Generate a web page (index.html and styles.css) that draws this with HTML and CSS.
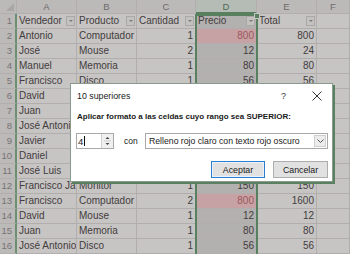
FILE: index.html
```html
<!DOCTYPE html>
<html lang="es">
<head>
<meta charset="utf-8">
<title>10 superiores</title>
<link rel="stylesheet" href="styles.css">
</head>
<body>
<div class="sheet">
  <div class="corner"><span class="tri"></span></div>
  <div class="ch">A</div><div class="ch">B</div><div class="ch">C</div><div class="ch sel">D</div><div class="ch">E</div><div class="ch">F</div>

  <div class="rh">1</div>
  <div class="c hd"><span class="t">Vendedor</span><span class="fb"></span></div>
  <div class="c hd"><span class="t">Producto</span><span class="fb"></span></div>
  <div class="c hd"><span class="t">Cantidad</span><span class="fb"></span></div>
  <div class="c hd d"><span class="t">Precio</span><span class="fb"></span></div>
  <div class="c hd"><span class="t">Total</span><span class="fb"></span></div>
  <div class="c"></div>

  <div class="rh">2</div><div class="c">Antonio</div><div class="c">Computador</div><div class="c n">1</div><div class="c n d red">800</div><div class="c n">800</div><div class="c"></div>
  <div class="rh">3</div><div class="c">José</div><div class="c">Mouse</div><div class="c n">2</div><div class="c n d">12</div><div class="c n">24</div><div class="c"></div>
  <div class="rh">4</div><div class="c">Manuel</div><div class="c">Memoria</div><div class="c n">1</div><div class="c n d">80</div><div class="c n">80</div><div class="c"></div>
  <div class="rh">5</div><div class="c">Francisco</div><div class="c">Disco</div><div class="c n">1</div><div class="c n d">56</div><div class="c n">56</div><div class="c"></div>
  <div class="rh">6</div><div class="c">David</div><div class="c"></div><div class="c n"></div><div class="c n d"></div><div class="c n"></div><div class="c"></div>
  <div class="rh">7</div><div class="c">Juan</div><div class="c"></div><div class="c n"></div><div class="c n d"></div><div class="c n"></div><div class="c"></div>
  <div class="rh">8</div><div class="c">José Antonio</div><div class="c"></div><div class="c n"></div><div class="c n d"></div><div class="c n"></div><div class="c"></div>
  <div class="rh">9</div><div class="c">Javier</div><div class="c"></div><div class="c n"></div><div class="c n d"></div><div class="c n"></div><div class="c"></div>
  <div class="rh">10</div><div class="c">Daniel</div><div class="c"></div><div class="c n"></div><div class="c n d"></div><div class="c n"></div><div class="c"></div>
  <div class="rh">11</div><div class="c">José Luis</div><div class="c"></div><div class="c n"></div><div class="c n d"></div><div class="c n"></div><div class="c"></div>
  <div class="rh">12</div><div class="c">Francisco Javier</div><div class="c">Monitor</div><div class="c n">1</div><div class="c n d">150</div><div class="c n">150</div><div class="c"></div>
  <div class="rh">13</div><div class="c">Francisco</div><div class="c">Computador</div><div class="c n">2</div><div class="c n d red">800</div><div class="c n">1600</div><div class="c"></div>
  <div class="rh">14</div><div class="c">David</div><div class="c">Mouse</div><div class="c n">1</div><div class="c n d">12</div><div class="c n">12</div><div class="c"></div>
  <div class="rh">15</div><div class="c">Juan</div><div class="c">Memoria</div><div class="c n">1</div><div class="c n d">80</div><div class="c n">80</div><div class="c"></div>
  <div class="rh">16</div><div class="c">José Antonio</div><div class="c">Disco</div><div class="c n">1</div><div class="c n d">56</div><div class="c n">56</div><div class="c"></div>

  <div class="selbox"><span class="handle"></span></div>
</div>

<div class="dialog">
  <div class="titlebar">
    <span class="title">10 superiores</span>
    <span class="help">?</span>
    <svg class="close" width="10" height="10" viewBox="0 0 10 10"><path d="M0.5 0.5 L9.5 9.5 M9.5 0.5 L0.5 9.5" stroke="#333" stroke-width="1" fill="none"/></svg>
  </div>
  <div class="body">
    <div class="label">Aplicar formato a las celdas cuyo rango sea SUPERIOR:</div>
    <div class="row">
      <div class="spin">
        <span class="val">4</span><span class="caret"></span>
        <span class="arrows">
          <svg width="9" height="14" viewBox="0 0 9 14"><path d="M2.5 5 L4.5 3 L6.5 5 Z M2.5 9 L4.5 11 L6.5 9 Z" fill="#444"/><line x1="1" y1="7" x2="8" y2="7" stroke="#ccc"/></svg>
        </span>
      </div>
      <span class="con">con</span>
      <div class="select">
        <span class="opt">Relleno rojo claro con texto rojo oscuro</span>
        <span class="dd"><svg width="7" height="4" viewBox="0 0 7 4"><path d="M0.5 0.5 L3.5 3.5 L6.5 0.5" stroke="#555" fill="none"/></svg></span>
      </div>
    </div>
    <div class="buttons">
      <div class="btn default">Aceptar</div>
      <div class="btn">Cancelar</div>
    </div>
  </div>
</div>
</body>
</html>
```

FILE: styles.css
```css
html, body {
  margin: 0;
  padding: 0;
  width: 350px;
  height: 254px;
  overflow: hidden;
  background: #c7c4c4;
}

.sheet {
  position: relative;
  display: grid;
  grid-template-columns: 17px 60px 60px 59px 61px 60px 33px;
  grid-template-rows: 14px repeat(16, 15px);
  font-family: "Liberation Sans", Arial, sans-serif;
  font-size: 10px;
  color: #433d3d;
}

.sheet > div {
  box-sizing: border-box;
  border-right: 1px solid #b2aeae;
  border-bottom: 1px solid #b2aeae;
  overflow: hidden;
  white-space: nowrap;
}

.corner {
  background: #bcb9b9;
  position: relative;
}
.tri {
  position: absolute;
  right: 2px;
  bottom: 2px;
  width: 0;
  height: 0;
  border-left: 8px solid transparent;
  border-bottom: 8px solid #a9a6a6;
}

.ch {
  background: #bcb9b9;
  color: #6e6b6b;
  text-align: center;
  line-height: 13px;
  font-size: 9.5px;
}
.ch.sel {
  background: #b5bcb5;
  color: #4c6a52;
  border-bottom: 2px solid #58805e !important;
}

.rh {
  background: #bcb9b9;
  color: #767373;
  text-align: right;
  padding-right: 3px;
  line-height: 14px;
  font-size: 9.5px;
  border-right: 2px solid #6c8f71 !important;
}

.c {
  background: #c7c4c4;
  line-height: 14px;
  padding: 0 2px;
}
.c.n { text-align: right; }
.c.d { background: #b3b0b0; }
.c.red { background: #c6a2a4; color: #a0585c; }

.c.hd {
  display: flex;
  align-items: center;
  padding-right: 1px;
}
.c.hd .t {
  flex: 1;
  overflow: hidden;
}
.fb {
  flex: none;
  width: 9px;
  height: 10px;
  box-sizing: border-box;
  border: 1px solid #aaa7a7;
  background: #c4c1c1;
  position: relative;
}
.fb::after {
  content: "";
  position: absolute;
  left: 2px;
  top: 3px;
  border-left: 2px solid transparent;
  border-right: 2px solid transparent;
  border-top: 2px solid #7b7878;
}

.selbox {
  position: absolute;
  left: 195px;
  top: 14px;
  width: 63px;
  height: 250px;
  box-sizing: border-box;
  border: 2px solid #58805e !important;
  overflow: visible !important;
}
.handle {
  position: absolute;
  right: -4px;
  top: -3px;
  width: 4px;
  height: 4px;
  background: #58805e;
  border: 1px solid #c7c4c4;
}

.dialog {
  position: absolute;
  left: 70px;
  top: 83px;
  width: 263px;
  height: 99px;
  box-sizing: border-box;
  background: #ffffff;
  border: 1px solid #8a9a8c;
  box-shadow: 2px 2px 0 #5b8061;
  font-family: "Liberation Sans", Arial, sans-serif;
  color: #1a1a1a;
}

.titlebar {
  display: flex;
  align-items: center;
  height: 23px;
  padding-left: 6px;
  padding-right: 10px;
}
.title {
  flex: 1;
  font-size: 8.8px;
}
.help {
  font-size: 9px;
  color: #333;
  margin-right: 26px;
}
.close { display: block; }

.body {
  padding: 0 4px 0 5px;
}
.label {
  font-size: 8px;
  font-weight: bold;
  padding-left: 1px;
  height: 26px;
  line-height: 20px;
}
.row {
  display: flex;
  align-items: center;
  height: 16px;
}
.spin {
  display: flex;
  align-items: center;
  width: 38px;
  height: 16px;
  box-sizing: border-box;
  border: 1px solid #a9a9a9;
  background: #fff;
}
.val {
  font-size: 9.5px;
  padding-left: 1px;
}
.caret {
  width: 1px;
  height: 10px;
  background: #111;
  margin-left: 1px;
}
.arrows {
  margin-left: auto;
  width: 11px;
  height: 14px;
  display: flex;
  justify-content: center;
  border-left: 1px solid #d0d0d0;
  background: #f0f0f0;
}
.con {
  font-size: 8.5px;
  margin: 0 6px 0 10px;
  width: 15px;
}
.select {
  flex: 1;
  display: flex;
  align-items: center;
  height: 16px;
  box-sizing: border-box;
  border: 1px solid #a9a9a9;
  background: #fff;
  padding-left: 3px;
  padding-right: 1px;
}
.opt {
  flex: 1;
  font-size: 8.7px;
  white-space: nowrap;
}
.dd {
  width: 12px;
  height: 12px;
  box-sizing: border-box;
  border: 1px solid #cfcfcf;
  background: #ececec;
  display: flex;
  align-items: center;
  justify-content: center;
}

.buttons {
  display: flex;
  justify-content: flex-end;
  gap: 8px;
  margin-top: 12px;
}
.btn {
  width: 55px;
  height: 17px;
  box-sizing: border-box;
  border: 1px solid #adadad;
  background: #e1e1e1;
  font-size: 8.8px;
  display: flex;
  align-items: center;
  justify-content: center;
}
.btn.default {
  width: 54px;
  border: 1px solid #2a7fd0;
  box-shadow: inset 0 0 0 1px #e9f2fb;
}
```
